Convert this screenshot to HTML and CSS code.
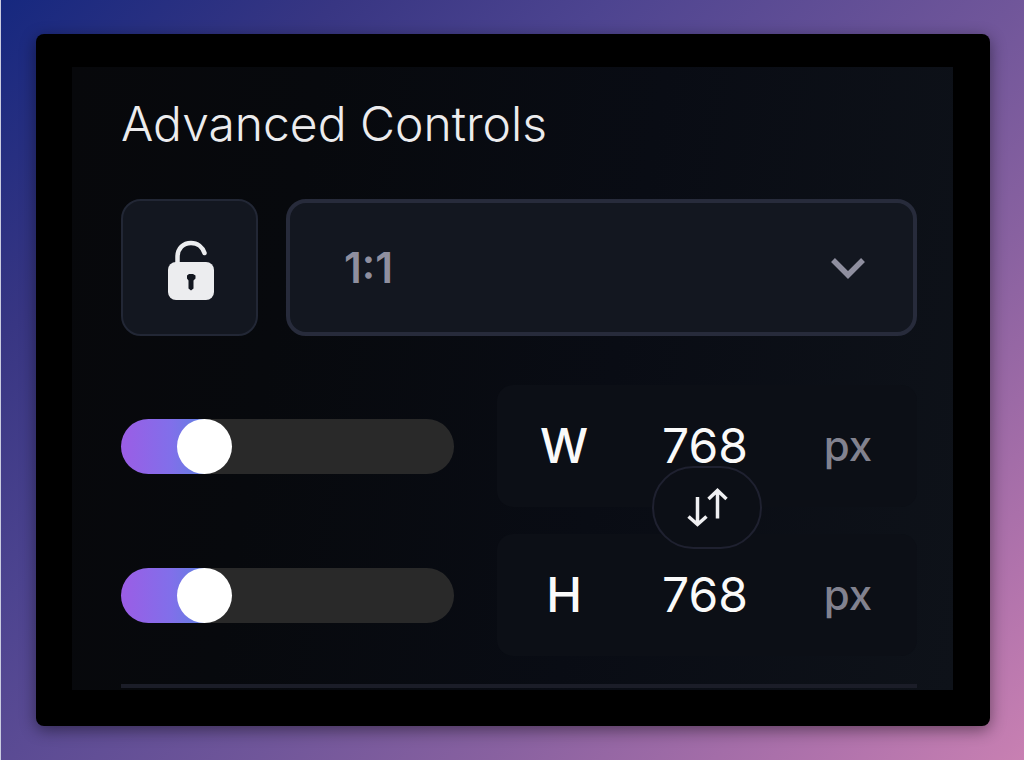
FILE: index.html
```html
<!DOCTYPE html>
<html lang="en">
<head>
<meta charset="utf-8">
<title>Advanced Controls</title>
<link rel="stylesheet" href="styles.css">
</head>
<body>
<main class="frame">
  <section class="panel">
    <h1 class="title">Advanced Controls</h1>
    <div class="ratio-row">
      <button class="lock" type="button" aria-label="Unlock aspect ratio">
        <svg width="48" height="62" viewBox="0 0 48 62" aria-hidden="true">
          <path d="M10.500 26V18C10.500 9 16.500 4 24 4C30.500 4 35.500 8 37.500 14" fill="none" stroke="#ecedef" stroke-width="4.500" stroke-linecap="round"/>
          <rect x="1" y="23" width="46" height="38" rx="8" fill="#ecedef"/>
          <path d="M20 36.500L22 35H26L28.500 36.500V39.500L26.500 41.500V49.500L24 51.500L21.500 49.500V41.500L20 39.500Z" fill="#131720"/>
        </svg>
      </button>
      <div class="select-wrap">
        <select class="select" aria-label="Aspect ratio">
          <option>1:1</option>
          <option>4:3</option>
          <option>16:9</option>
        </select>
        <svg class="chevron" width="36" height="24" viewBox="0 0 36 24" aria-hidden="true">
          <path d="M3 3L18 18L33 3" fill="none" stroke="#8f8f9f" stroke-width="5.500"/>
        </svg>
      </div>
    </div>
    <div class="dimensions">
      <div class="dim-row">
        <input class="slider" type="range" min="0" max="100" value="20" aria-label="Width slider">
        <div class="field">
          <label class="field-name" for="width">W</label>
          <input class="field-value" id="width" type="text" value="768">
          <span class="unit">px</span>
        </div>
      </div>
      <div class="dim-row">
        <input class="slider" type="range" min="0" max="100" value="20" aria-label="Height slider">
        <div class="field">
          <label class="field-name" for="height">H</label>
          <input class="field-value" id="height" type="text" value="768">
          <span class="unit">px</span>
        </div>
      </div>
      <button class="swap" type="button" aria-label="Swap width and height">
        <svg width="42" height="42" viewBox="0 0 42 42" fill="none" stroke="#f0f0f2" stroke-width="3.500" aria-hidden="true">
          <path d="M11.500 10V37M2.500 29.500L11.500 37.500L20.500 29.500"/>
          <path d="M31.500 31.500V3.500M22.500 12L31.500 3.500L40.500 12"/>
        </svg>
      </button>
    </div>
    <hr class="divider">
  </section>
</main>
</body>
</html>
```
FILE: styles.css
```css
* {
  box-sizing: border-box;
}

body {
  margin: 0;
  min-height: 100vh;
  display: flex;
  padding: 34px 34px 34px 35px;
  border-left: 1px solid #c9cbe0;
  background: linear-gradient(135deg, #16287f 0%, #383683 19%, #4d4490 34%, #70569a 57%, #8861a0 70%, #b173ac 89%, #c880b2 100%);
  font-family: Inter, "Liberation Sans", sans-serif;
  color: #fafafa;
}

.frame {
  flex: 1;
  display: flex;
  padding: 33px 37px 36px 36px;
  border-radius: 8px;
  background: #000;
  box-shadow: 0 4px 16px rgba(0, 0, 0, 0.45);
}

.panel {
  flex: 1;
  padding: 27px 36px 1px 49px;
  background: linear-gradient(100deg, #07080b 0%, #07090d 25%, #090c14 60%, #0e1219 100%);
}

.title {
  margin: 0 0 45px;
  font-size: 48px;
  line-height: 60px;
  font-weight: 300;
  color: #ececee;
}

.ratio-row {
  display: flex;
  gap: 28px;
  margin-bottom: 49px;
}

.lock {
  width: 137px;
  height: 137px;
  padding: 4px 0 0 2px;
  display: flex;
  align-items: center;
  justify-content: center;
  border: 2px solid #222735;
  border-radius: 20px;
  background: #131720;
}

.select-wrap {
  position: relative;
  flex: 1;
}

.select {
  width: 100%;
  height: 137px;
  padding: 0 100px 0 54px;
  appearance: none;
  border: 4px solid #272b3b;
  border-radius: 20px;
  background: #131720;
  color: #8f8f9f;
  font-family: inherit;
  font-size: 42px;
  font-weight: 600;
}

.chevron {
  position: absolute;
  right: 51px;
  top: 58px;
  pointer-events: none;
}

.dimensions {
  position: relative;
  display: flex;
  flex-direction: column;
  gap: 27px;
  margin-bottom: 28px;
}

.dim-row {
  display: grid;
  grid-template-columns: 333fr 420fr;
  gap: 43px;
  align-items: center;
}

.slider {
  appearance: none;
  width: 100%;
  height: 55px;
  margin: 0;
  border-radius: 28px;
  background: linear-gradient(90deg, #9b5de5 0%, #816fea 15%, #6280e2 25%, #292929 25%);
}

.slider::-webkit-slider-thumb {
  appearance: none;
  width: 55px;
  height: 55px;
  border-radius: 50%;
  background: #fff;
}

.field {
  display: grid;
  grid-template-columns: minmax(0, 134fr) minmax(0, 148fr) minmax(0, 138fr);
  align-items: center;
  height: 122px;
  border-radius: 16px;
  background: #0c0f16;
  text-align: center;
}

.field-name,
.field-value {
  font-size: 48px;
  line-height: 58px;
}

.field-name {
  font-weight: 500;
}

.field-value {
  width: 100%;
  padding: 0;
  border: 0;
  background: none;
  color: inherit;
  font-family: inherit;
  text-align: center;
}

.unit {
  font-size: 42px;
  line-height: 58px;
  font-weight: 500;
  color: #82828f;
}

.swap {
  position: absolute;
  right: 155px;
  top: 81px;
  width: 110px;
  height: 83px;
  padding: 0;
  display: flex;
  align-items: center;
  justify-content: center;
  border: 2px solid #1f2130;
  border-radius: 42px;
  background: #0c0f16;
}

.divider {
  height: 4px;
  margin: 0;
  border: 0;
  background: #1b1d28;
}
```
